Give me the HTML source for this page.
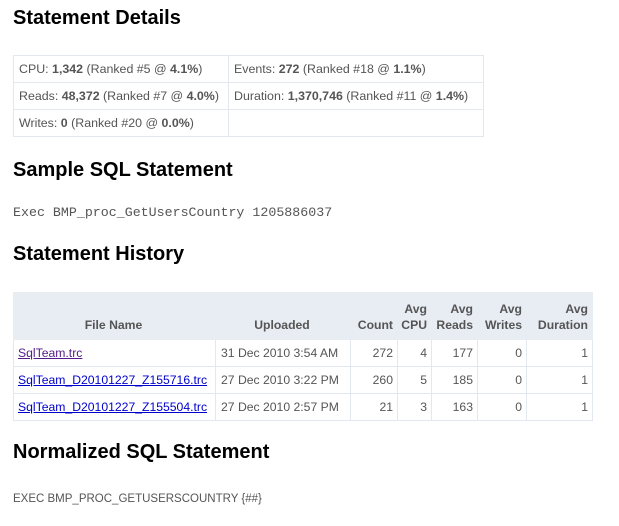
<!DOCTYPE html>
<html><head><style>
body{margin:0;width:619px;height:526px;background:#fff;font-family:"Liberation Sans",sans-serif;color:#555;position:relative;overflow:hidden}
h2{position:absolute;left:13px;margin:0;font-size:20px;font-weight:bold;color:#000;line-height:22px;letter-spacing:0}
table{position:absolute;border-collapse:collapse;font-size:12.4px;color:#555;table-layout:fixed}
td,th{border:1px solid #e3e8f0;padding:0 5px;white-space:nowrap;overflow:hidden}
.t1 td{height:26px}
b{color:#555}
.t2{font-size:12.2px}
.t2 th{background:#e8ecf3;border-color:#e8ecf3;font-weight:bold;vertical-align:bottom;text-align:right;line-height:16px;padding:0 4px 6px 2px}
.t2 td{height:26px;text-align:right;padding:0 4px}
.t2 td:first-child{text-align:left}
.t2 td:nth-child(2){text-align:left;padding-left:5px}
a{color:#00c;text-decoration:underline}
a.v{color:#551a8b}
.mono{position:absolute;left:13px;font-family:"Liberation Mono",monospace;font-size:13.3px;color:#555}
</style></head><body>
<h2 style="top:7px">Statement Details</h2>
<table class="t1" style="left:13px;top:55px;width:471px">
<tr><td style="width:204px">CPU: <b>1,342</b> (Ranked #5 @ <b>4.1%</b>)</td><td>Events: <b>272</b> (Ranked #18 @ <b>1.1%</b>)</td></tr>
<tr><td>Reads: <b>48,372</b> (Ranked #7 @ <b>4.0%</b>)</td><td>Duration: <b>1,370,746</b> (Ranked #11 @ <b>1.4%</b>)</td></tr>
<tr><td>Writes: <b>0</b> (Ranked #20 @ <b>0.0%</b>)</td><td></td></tr>
</table>
<h2 style="top:159px">Sample SQL Statement</h2>
<div class="mono" style="top:205px">Exec BMP_proc_GetUsersCountry 1205886037</div>
<h2 style="top:243px">Statement History</h2>
<table class="t2" style="left:13px;top:292px;width:580px">
<colgroup><col style="width:202px"><col style="width:135px"><col style="width:47px"><col style="width:34px"><col style="width:46px"><col style="width:49px"><col></colgroup>
<tr style="height:47px"><th style="text-align:center">File Name</th><th style="text-align:center">Uploaded</th><th>Count</th><th>Avg<br>CPU</th><th>Avg<br>Reads</th><th>Avg<br>Writes</th><th>Avg<br>Duration</th></tr>
<tr><td><a class="v">SqlTeam.trc</a></td><td>31 Dec 2010 3:54 AM</td><td>272</td><td>4</td><td>177</td><td>0</td><td>1</td></tr>
<tr><td><a>SqlTeam_D20101227_Z155716.trc</a></td><td>27 Dec 2010 3:22 PM</td><td>260</td><td>5</td><td>185</td><td>0</td><td>1</td></tr>
<tr><td><a>SqlTeam_D20101227_Z155504.trc</a></td><td>27 Dec 2010 2:57 PM</td><td>21</td><td>3</td><td>163</td><td>0</td><td>1</td></tr>
</table>
<h2 style="top:441px">Normalized SQL Statement</h2>
<div style="position:absolute;left:13px;top:493px;font-size:11.5px;color:#555">EXEC BMP_PROC_GETUSERSCOUNTRY {##}</div>
</body></html>
